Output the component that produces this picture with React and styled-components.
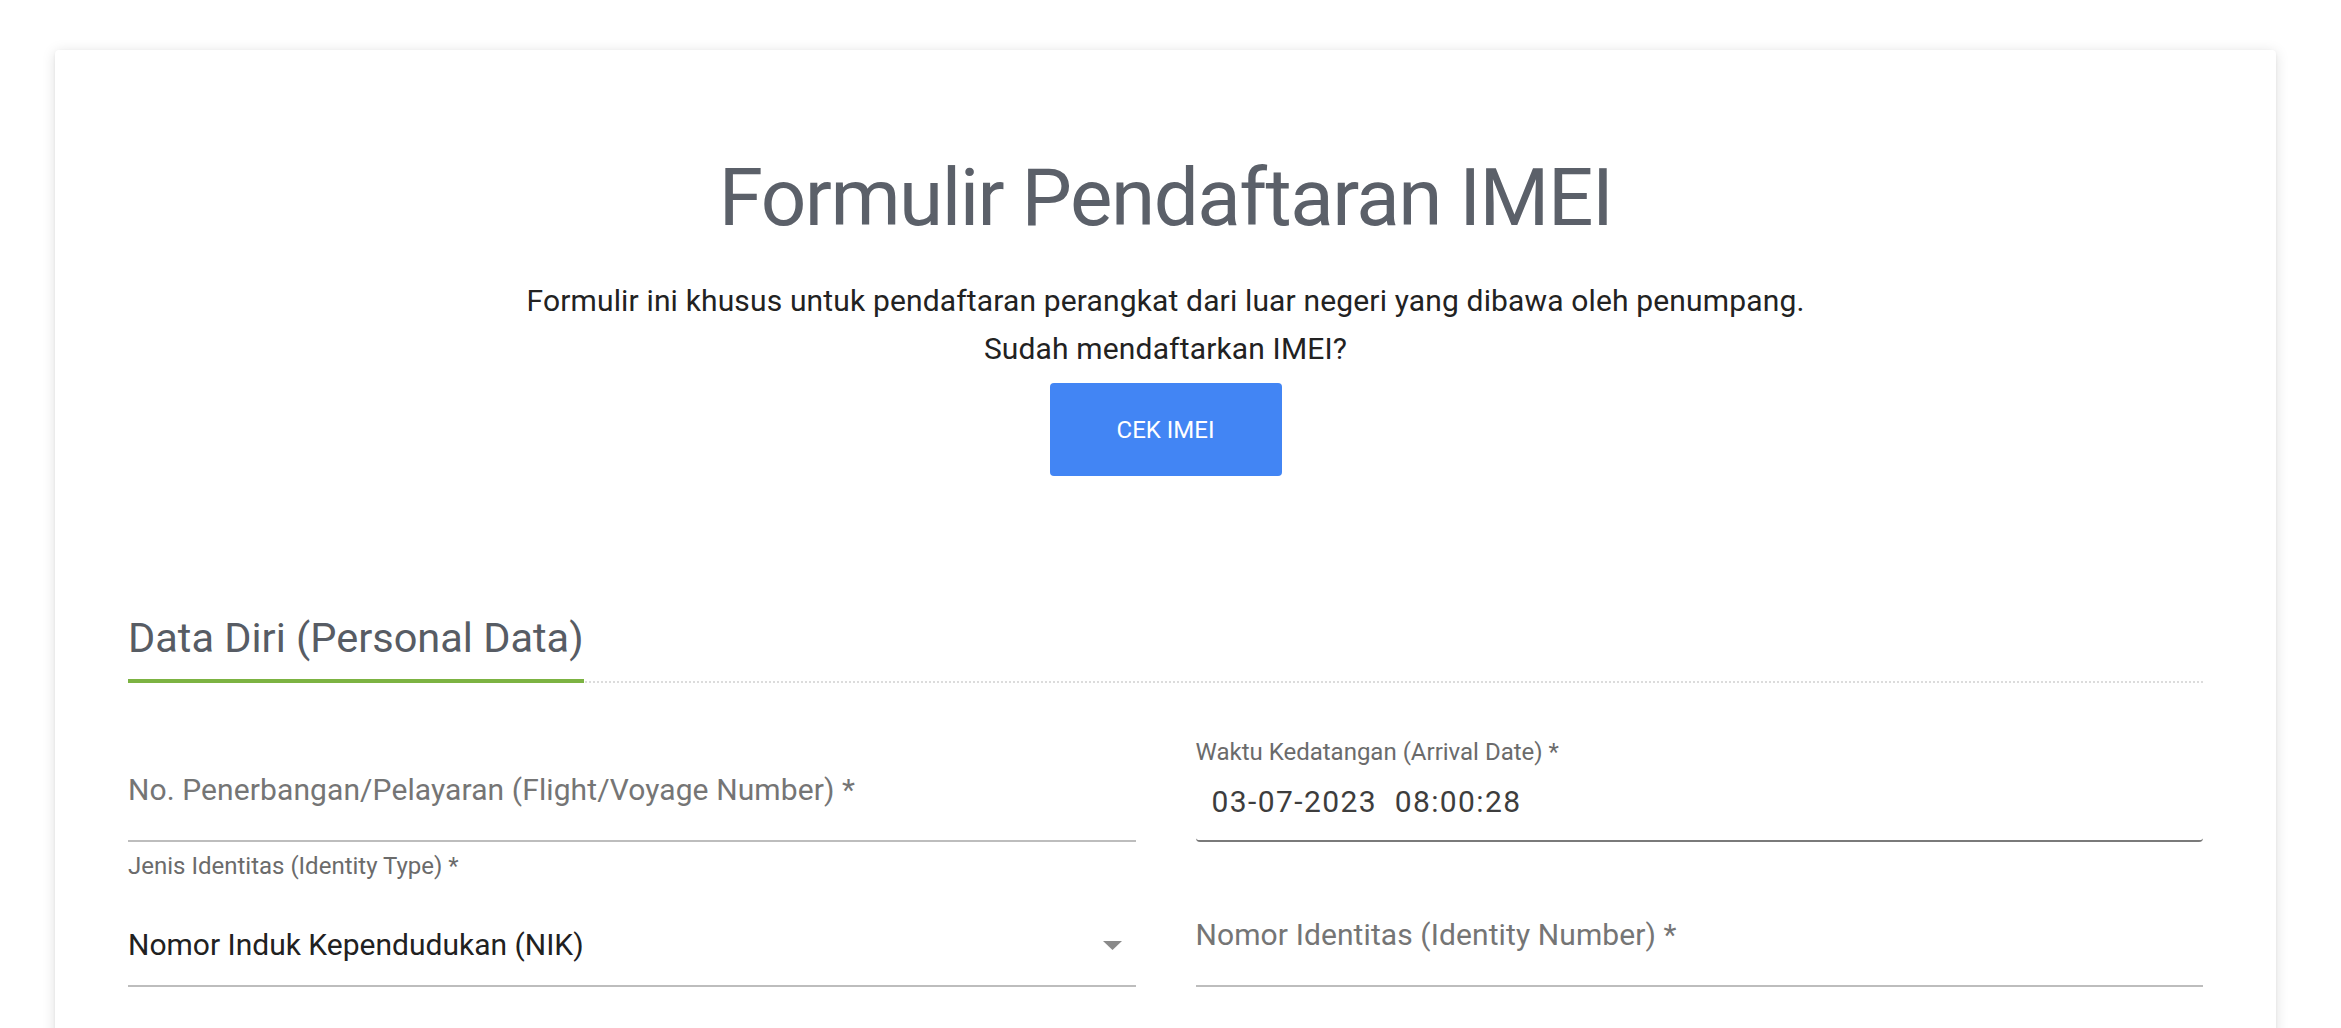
import React from "react";
import styled, { createGlobalStyle } from "styled-components";

const GlobalStyle = createGlobalStyle`
  html, body { margin: 0; padding: 0; background: #ffffff; }
  body { font-family: Roboto, "Noto Sans", Arial, sans-serif; }
  * { box-sizing: border-box; }
`;

const Page = styled.div`
  padding: 50px 65px 0 55px;
`;

const Card = styled.main`
  background: #ffffff;
  border-radius: 4px;
  box-shadow: 0 2px 14px rgba(0, 0, 0, 0.13), 0 1px 3px rgba(0, 0, 0, 0.06);
  padding: 100px 73px 120px;
  min-height: 1100px;
`;

const Intro = styled.header`
  display: flex;
  flex-direction: column;
  align-items: center;
  text-align: center;
`;

const Title = styled.h1`
  margin: 0;
  font-size: 80px;
  line-height: 96px;
  font-weight: 400;
  letter-spacing: -1.5px;
  color: #5b6069;
`;

const Lead = styled.p`
  margin: 31px 0 0;
  font-size: 30px;
  line-height: 48px;
  letter-spacing: 0.15px;
  color: #222222;
`;

const Button = styled.button`
  margin-top: 10px;
  width: 232px;
  height: 93px;
  border: none;
  border-radius: 4px;
  background: #4285f4;
  color: #ffffff;
  font-family: inherit;
  font-size: 24px;
  text-transform: uppercase;
  cursor: pointer;
`;

const Section = styled.section`
  margin-top: 137px;
`;

const SectionHeader = styled.div`
  display: flex;
  border-bottom: 2px dotted #dcdcdc;
`;

const SectionTitle = styled.h2`
  margin: 0 0 -2px;
  font-size: 41.5px;
  line-height: 49px;
  font-weight: 400;
  color: #575c64;
  padding-bottom: 17px;
  border-bottom: 4px solid #7cb342;
`;

const FieldGrid = styled.div`
  margin-top: 55px;
  display: grid;
  grid-template-columns: 1fr 1fr;
  column-gap: 60px;
  row-gap: 10px;
  align-items: end;
`;

const Field = styled.div`
  display: flex;
  flex-direction: column;
`;

const Label = styled.label`
  font-size: 24px;
  line-height: 28px;
  color: #6b6b6b;
  margin-bottom: ${(p) => p.$gap}px;
`;

const Control = styled.div`
  display: flex;
  align-items: center;
  font-size: 30px;
  line-height: 36px;
  white-space: pre;
  letter-spacing: ${(p) => p.$ls || 0}px;
  color: ${(p) => p.$color};
  padding: 0 ${(p) => p.$pr || 0}px ${(p) => p.$pb}px ${(p) => p.$pl || 0}px;
  border-bottom: 2px solid ${(p) => p.$line};
  border-radius: ${(p) => (p.$rounded ? "4px" : "0")};
`;

const Caret = styled.svg`
  margin-left: auto;
  flex: none;
`;

function TextField({ placeholder }) {
  return (
    <Field>
      <Control $color="#757575" $line="#bdbdbd" $pb={32} $ls={0.1}>
        {placeholder}
      </Control>
    </Field>
  );
}

function SelectField({ label, value }) {
  return (
    <Field>
      <Label $gap={47}>{label}</Label>
      <Control $color="#212121" $line="#bdbdbd" $pb={22} $pr={14}>
        {value}
        <Caret width="19" height="9" viewBox="0 0 19 9">
          <polygon points="0,0 19,0 9.5,9" fill="#8a8a8a" />
        </Caret>
      </Control>
    </Field>
  );
}

function DateField({ label, value }) {
  return (
    <Field>
      <Label $gap={18}>{label}</Label>
      <Control $color="#3d3d3d" $line="#7a7a7a" $pb={20} $pl={16} $ls={1.4} $rounded>
        {value}
      </Control>
    </Field>
  );
}

export default function App() {
  return (
    <>
      <GlobalStyle />
      <Page>
        <Card>
          <Intro>
            <Title>Formulir Pendaftaran IMEI</Title>
            <Lead>
              Formulir ini khusus untuk pendaftaran perangkat dari luar negeri yang dibawa oleh penumpang.
              <br />
              Sudah mendaftarkan IMEI?
            </Lead>
            <Button>Cek IMEI</Button>
          </Intro>
          <Section>
            <SectionHeader>
              <SectionTitle>Data Diri (Personal Data)</SectionTitle>
            </SectionHeader>
            <FieldGrid>
              <TextField placeholder="No. Penerbangan/Pelayaran (Flight/Voyage Number) *" />
              <DateField label="Waktu Kedatangan (Arrival Date) *" value="03-07-2023  08:00:28" />
              <SelectField label="Jenis Identitas (Identity Type) *" value="Nomor Induk Kependudukan (NIK)" />
              <TextField placeholder="Nomor Identitas (Identity Number) *" />
            </FieldGrid>
          </Section>
        </Card>
      </Page>
    </>
  );
}
